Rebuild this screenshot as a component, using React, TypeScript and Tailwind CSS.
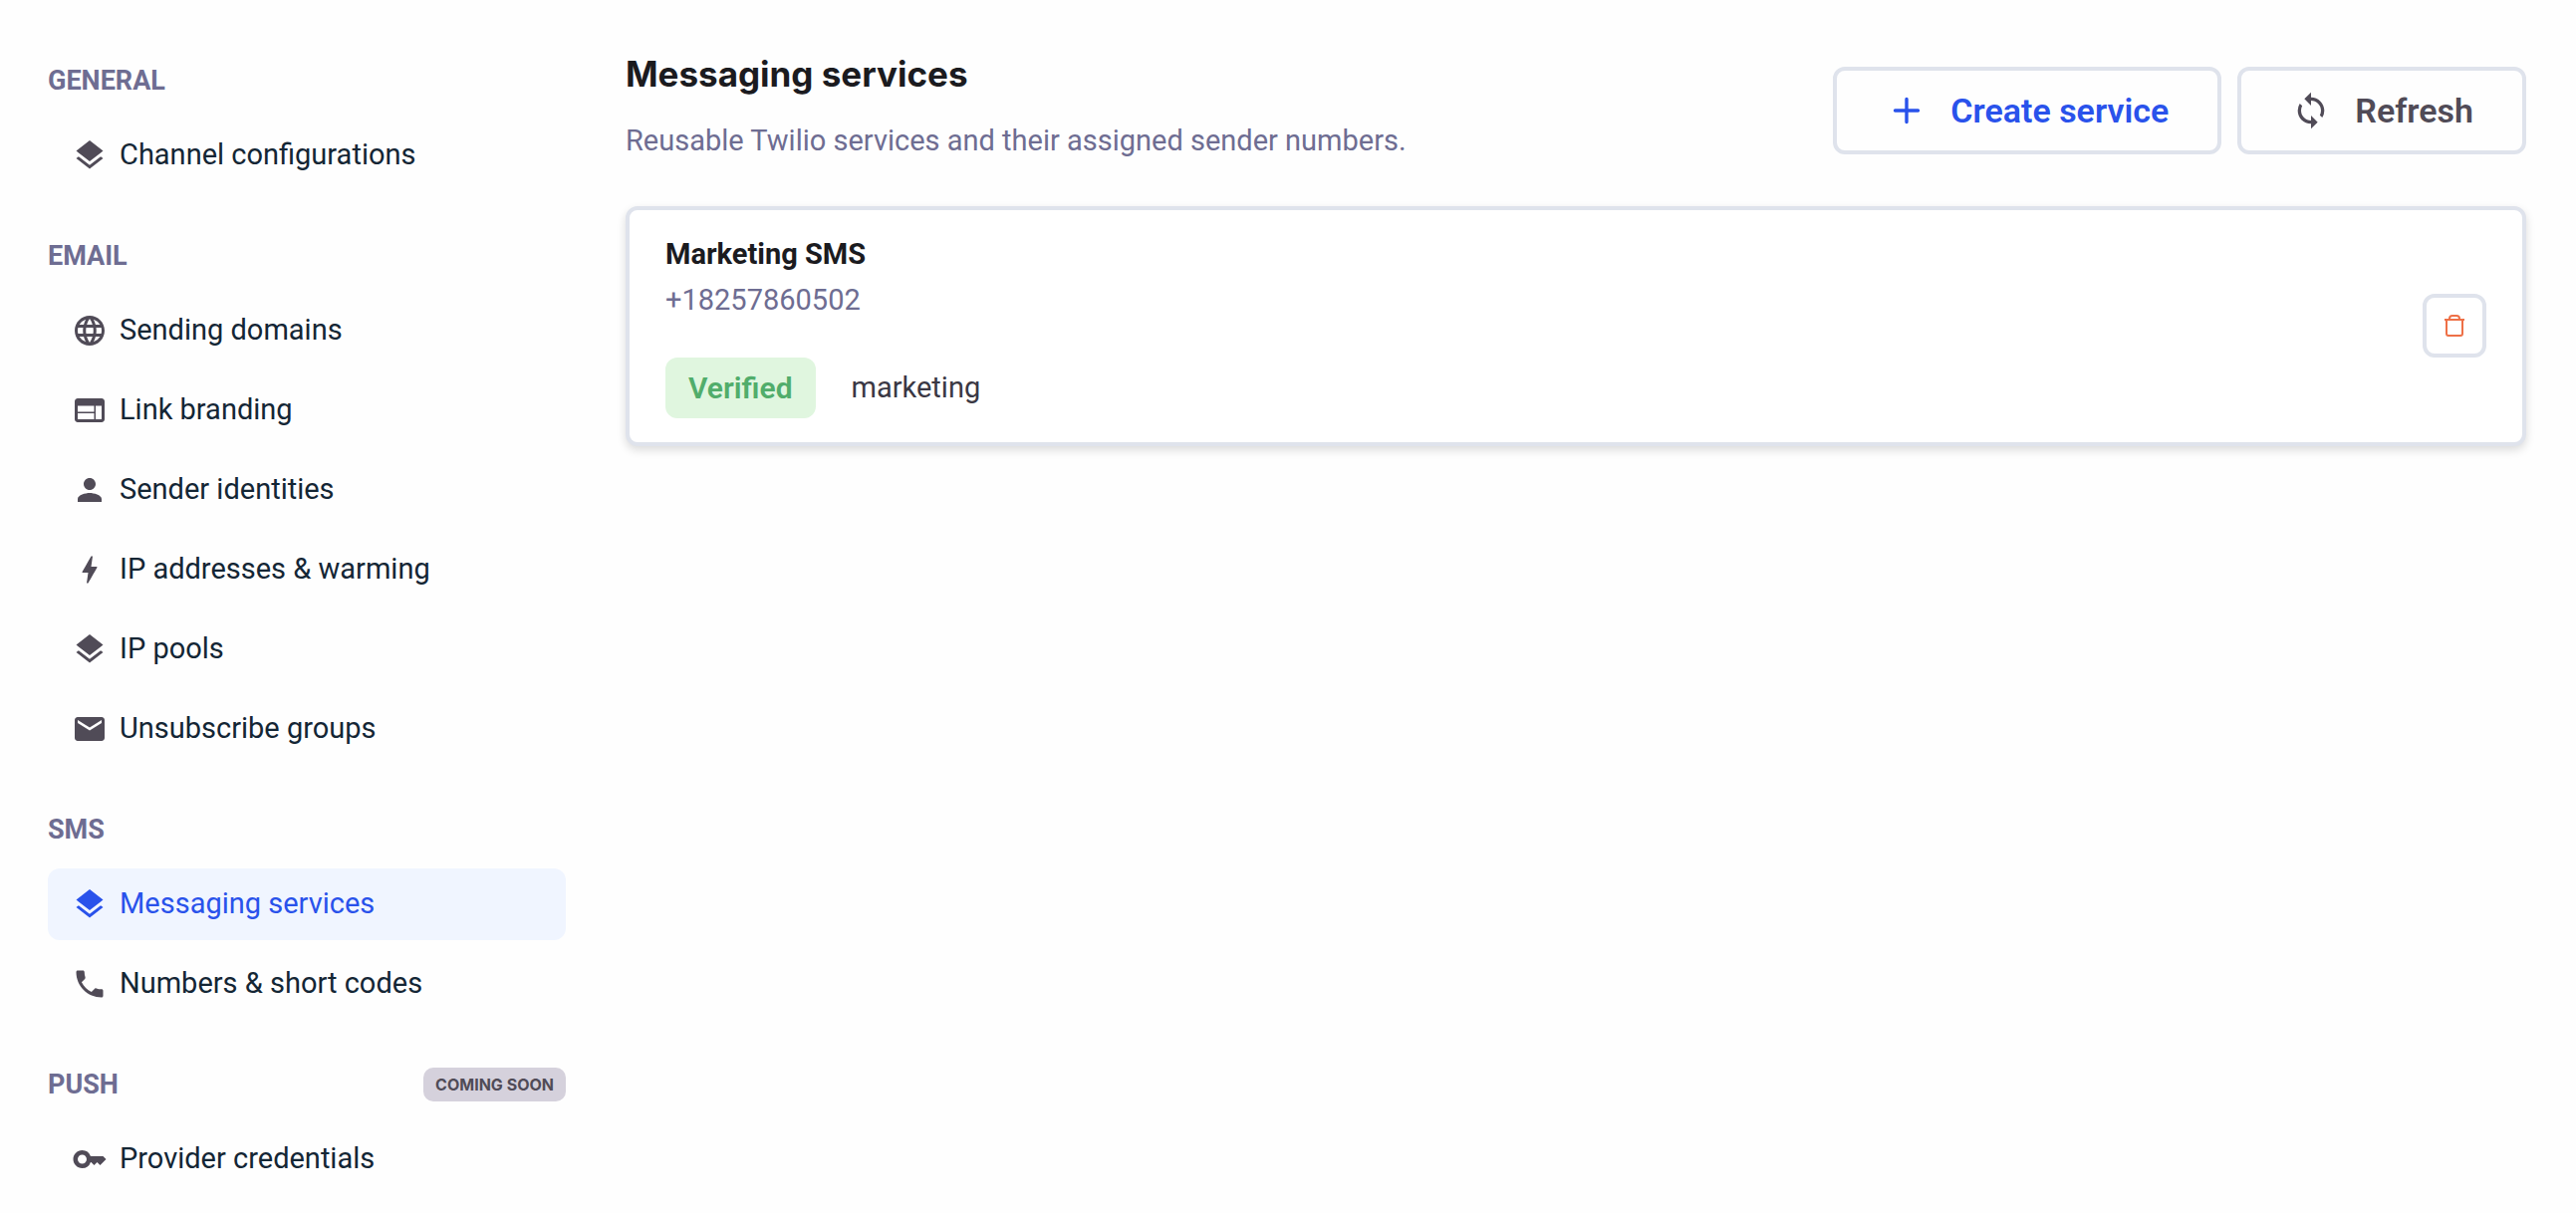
import type { IconType } from 'react-icons'
import {
  MdBolt,
  MdEmail,
  MdKey,
  MdLanguage,
  MdLayers,
  MdPerson,
  MdPhone,
  MdSync,
  MdWeb,
} from 'react-icons/md'
import clsx from 'clsx'

type NavItem = { href: string; label: string; icon: IconType }
type NavSection = { title: string; badge?: string; items: NavItem[] }

const ACTIVE_HREF = '#messaging-services'

const NAV_SECTIONS: NavSection[] = [
  {
    title: 'GENERAL',
    items: [{ href: '#channels', label: 'Channel configurations', icon: MdLayers }],
  },
  {
    title: 'EMAIL',
    items: [
      { href: '#domains', label: 'Sending domains', icon: MdLanguage },
      { href: '#link-branding', label: 'Link branding', icon: MdWeb },
      { href: '#identities', label: 'Sender identities', icon: MdPerson },
      { href: '#ips', label: 'IP addresses & warming', icon: MdBolt },
      { href: '#ip-pools', label: 'IP pools', icon: MdLayers },
      { href: '#unsubscribe', label: 'Unsubscribe groups', icon: MdEmail },
    ],
  },
  {
    title: 'SMS',
    items: [
      { href: '#messaging-services', label: 'Messaging services', icon: MdLayers },
      { href: '#numbers', label: 'Numbers & short codes', icon: MdPhone },
    ],
  },
  {
    title: 'PUSH',
    badge: 'COMING SOON',
    items: [{ href: '#credentials', label: 'Provider credentials', icon: MdKey }],
  },
]

const SERVICES = [
  { name: 'Marketing SMS', phone: '+18257860502', status: 'Verified', usecase: 'marketing' },
]

function PlusIcon({ className }: { className?: string }) {
  return (
    <svg viewBox="0 0 40 40" fill="none" stroke="currentColor" strokeWidth="3.4" strokeLinecap="round" className={className} aria-hidden="true">
      <path d="M20 8.5v23M8.5 20h23" />
    </svg>
  )
}

function TrashIcon({ className }: { className?: string }) {
  return (
    <svg viewBox="0 0 24 24" fill="none" stroke="currentColor" strokeWidth="2" className={className} aria-hidden="true">
      <path d="M2 6h20M4 6v14q0 2 2 2h12q2 0 2-2V6M7 6V5q0-3 3-3h4q3 0 3 3v1" />
    </svg>
  )
}

function Sidebar() {
  return (
    <nav className="flex w-[520px] shrink-0 flex-col gap-12 pt-16 pb-5">
      {NAV_SECTIONS.map(({ title, badge, items }) => (
        <section key={title}>
          <div className="mb-[22px] flex h-[34px] items-center justify-between">
            <h2 className="text-[27px] font-bold text-[#6e6d92]">{title}</h2>
            {badge && (
              <span className="flex h-[34px] items-center rounded-[10px] bg-[#d5d1dc] px-3 font-['Inter'] text-[16px] font-bold text-[#504b57]">
                {badge}
              </span>
            )}
          </div>
          <ul className="flex flex-col gap-2">
            {items.map(({ href, label, icon: Icon }) => {
              const isActive = href === ACTIVE_HREF
              return (
                <li key={href}>
                  <a
                    href={href}
                    className={clsx(
                      'flex h-[72px] items-center gap-3 rounded-xl px-6 text-[29px]',
                      isActive ? 'bg-[#f0f5ff] text-[#2952eb]' : 'text-[#142635]',
                    )}
                  >
                    <Icon className={clsx('size-9 shrink-0', !isActive && 'text-[#504b57]')} />
                    {label}
                  </a>
                </li>
              )
            })}
          </ul>
        </section>
      ))}
    </nav>
  )
}

function ServiceCard({ name, phone, status, usecase }: (typeof SERVICES)[number]) {
  return (
    <article className="flex items-center justify-between rounded-xl border-4 border-[#dfe3ec] bg-white px-9 pt-[22px] pb-6 shadow-[0_4px_10px_rgba(0,0,0,0.14)]">
      <div>
        <h3 className="text-[29px] leading-[44px] font-bold text-[#1b1b1f]">{name}</h3>
        <p className="text-[29px] leading-[48px] text-[#6e6d92]">{phone}</p>
        <div className="mt-[34px] flex items-center gap-9">
          <span className="flex h-[61px] items-center rounded-xl bg-[#e0f6df] px-[23px] text-[30px] font-semibold text-[#51ad6b]">
            {status}
          </span>
          <span className="text-[29px] text-[#3a3844]">{usecase}</span>
        </div>
      </div>
      <button
        type="button"
        aria-label={`Delete ${name}`}
        className="flex size-16 items-center justify-center rounded-xl border-4 border-[#dfe3ec] text-[#ee7047]"
      >
        <TrashIcon className="size-6" />
      </button>
    </article>
  )
}

export default function App() {
  return (
    <div className="flex min-h-screen gap-[60px] bg-[#fefefe] pr-[50px] pl-12 font-['Roboto','Liberation_Sans',sans-serif]">
      <Sidebar />
      <main className="min-w-0 flex-1 pt-[52px]">
        <header className="mb-[52px] flex items-end justify-between">
          <div>
            <h1 className="font-['Inter'] text-[35px] leading-[44px] font-bold text-[#1b1b1f]">Messaging services</h1>
            <p className="mt-[31px] text-[29px] leading-7 text-[#6e6d92]">
              Reusable Twilio services and their assigned sender numbers.
            </p>
          </div>
          <div className="flex gap-4">
            <button
              type="button"
              className="flex h-[88px] items-center gap-6 rounded-xl border-4 border-[#dfe3ec] pr-[49px] pl-[50px] text-[34px] font-semibold text-[#2952eb]"
            >
              <PlusIcon className="size-10" />
              Create service
            </button>
            <button
              type="button"
              className="flex h-[88px] items-center gap-6 rounded-xl border-4 border-[#dfe3ec] pr-[49px] pl-[50px] text-[34px] font-semibold text-[#504b57]"
            >
              <MdSync className="size-10" />
              Refresh
            </button>
          </div>
        </header>
        {SERVICES.map((service) => (
          <ServiceCard key={service.name} {...service} />
        ))}
      </main>
    </div>
  )
}
